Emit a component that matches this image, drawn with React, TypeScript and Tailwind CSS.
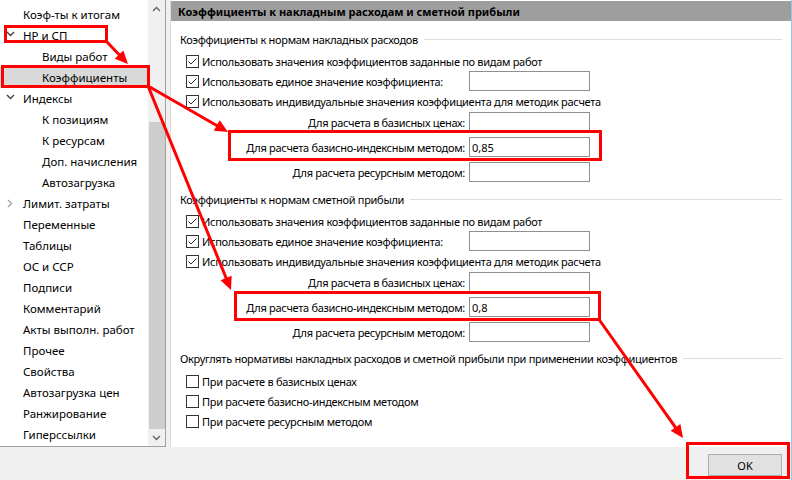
import React from "react";

type TreeRow = {
  label: string;
  level: 1 | 2;
  chevron?: "down" | "right";
  selected?: boolean;
};

const treeRows: TreeRow[] = [
  { label: "Коэф-ты к итогам", level: 1 },
  { label: "НР и СП", level: 1, chevron: "down" },
  { label: "Виды работ", level: 2 },
  { label: "Коэффициенты", level: 2, selected: true },
  { label: "Индексы", level: 1, chevron: "down" },
  { label: "К позициям", level: 2 },
  { label: "К ресурсам", level: 2 },
  { label: "Доп. начисления", level: 2 },
  { label: "Автозагрузка", level: 2 },
  { label: "Лимит. затраты", level: 1, chevron: "right" },
  { label: "Переменные", level: 1 },
  { label: "Таблицы", level: 1 },
  { label: "ОС и ССР", level: 1 },
  { label: "Подписи", level: 1 },
  { label: "Комментарий", level: 1 },
  { label: "Акты выполн. работ", level: 1 },
  { label: "Прочее", level: 1 },
  { label: "Свойства", level: 1 },
  { label: "Автозагрузка цен", level: 1 },
  { label: "Ранжирование", level: 1 },
  { label: "Гиперссылки", level: 1 },
];

function Chevron({ dir }: { dir: "down" | "right" }) {
  if (dir === "down") {
    return (
      <svg width="9" height="6" viewBox="0 0 9 6" className="absolute left-[6px] top-[6px]">
        <path d="M1 1 L4.5 4.5 L8 1" fill="none" stroke="#404040" strokeWidth="1.4" />
      </svg>
    );
  }
  return (
    <svg width="6" height="9" viewBox="0 0 6 9" className="absolute left-[7px] top-[6px]">
      <path d="M1 1 L4.5 4.5 L1 8" fill="none" stroke="#a6a6a6" strokeWidth="1.4" />
    </svg>
  );
}

function Tree() {
  return (
    <div className="flex-1 pt-[4px] text-[11.5px]">
      {treeRows.map((r) => (
        <div
          key={r.label}
          className={`relative h-[21px] flex items-center ${r.level === 1 ? "pl-[23px]" : "pl-[42px]"} ${
            r.selected ? "bg-[#d9d9d9]" : ""
          }`}
        >
          {r.chevron && <Chevron dir={r.chevron} />}
          <span className="whitespace-nowrap">{r.label}</span>
        </div>
      ))}
    </div>
  );
}

function ScrollBar() {
  return (
    <div className="w-[17px] flex flex-col bg-[#f0f0f0]">
      <div className="h-[17px] flex items-center justify-center">
        <svg width="9" height="6" viewBox="0 0 9 6">
          <path d="M1 5 L4.5 1.5 L8 5" fill="none" stroke="#606060" strokeWidth="1.4" />
        </svg>
      </div>
      <div className="h-[105px]" />
      <div className="flex-1 ml-px bg-[#cdcdcd]" />
      <div className="h-[17px] flex items-center justify-center">
        <svg width="9" height="6" viewBox="0 0 9 6">
          <path d="M1 1 L4.5 4.5 L8 1" fill="none" stroke="#606060" strokeWidth="1.4" />
        </svg>
      </div>
    </div>
  );
}

function CheckBox({ checked }: { checked: boolean }) {
  return (
    <span className="w-[13px] h-[13px] shrink-0 border border-[#333333] bg-white flex items-center justify-center">
      {checked && (
        <svg width="11" height="11" viewBox="0 0 11 11">
          <path d="M1.5 5.5 L4 8 L9.5 2.5" fill="none" stroke="#333333" strokeWidth="1" />
        </svg>
      )}
    </span>
  );
}

function TextBox({ value = "" }: { value?: string }) {
  return (
    <div className="w-[121px] h-[20px] border border-[#8f8f8f] bg-white flex items-center px-[2px] tracking-normal">
      {value}
    </div>
  );
}

function GroupTitle({ children }: { children: React.ReactNode }) {
  return (
    <div className="h-[20px] flex items-center pl-[9px] pr-[9px]">
      <span className="whitespace-nowrap">{children}</span>
      <div className="flex-1 h-px bg-[#d5dfe5] ml-[6px]" />
    </div>
  );
}

function CheckRow({ label, checked, input }: { label: string; checked: boolean; input?: boolean }) {
  return (
    <div className="h-[20px] flex items-center">
      <div className="w-[298px] flex items-center gap-[3px] pl-[15px]">
        <CheckBox checked={checked} />
        <span className="whitespace-nowrap">{label}</span>
      </div>
      {input && <TextBox />}
    </div>
  );
}

function FieldRow({ label, value }: { label: string; value?: string }) {
  return (
    <div className="h-[20px] flex items-center">
      <div className="w-[294px] text-right whitespace-nowrap">{label}</div>
      <div className="ml-[4px]">
        <TextBox value={value} />
      </div>
    </div>
  );
}

function CoefficientGroup({ title, index }: { title: string; index: string }) {
  return (
    <>
      <GroupTitle>{title}</GroupTitle>
      <div className="mt-[2px]">
        <CheckRow checked label="Использовать значения коэффициентов заданные по видам работ" />
        <CheckRow checked input label="Использовать единое значение коэффициента:" />
        <CheckRow checked label="Использовать индивидуальные значения коэффициента для методик расчета" />
      </div>
      <div className="mt-px flex flex-col gap-[5px]">
        <FieldRow label="Для расчета в базисных ценах:" />
        <FieldRow label="Для расчета базисно-индексным методом:" value={index} />
        <FieldRow label="Для расчета ресурсным методом:" />
      </div>
    </>
  );
}

function arrowHead(x1: number, y1: number, x2: number, y2: number) {
  const a = Math.atan2(y2 - y1, x2 - x1);
  const len = 13;
  const w = 6;
  const bx = x2 - len * Math.cos(a);
  const by = y2 - len * Math.sin(a);
  const px = -Math.sin(a) * w;
  const py = Math.cos(a) * w;
  return `${x2},${y2} ${bx + px},${by + py} ${bx - px},${by - py}`;
}

const arrows = [
  [107, 42, 128, 64],
  [148, 86, 228, 132],
  [148, 86, 231, 290],
  [598, 318, 683, 438],
];

function Annotations() {
  return (
    <svg className="absolute inset-0 pointer-events-none" width="792" height="480">
      <g fill="none" stroke="#ff0000" strokeWidth="3">
        <rect x="5.5" y="26.5" width="101" height="15" />
        <rect x="2.5" y="66.5" width="146" height="20" />
        <rect x="229.5" y="131.5" width="371" height="28" />
        <rect x="235.5" y="292.5" width="364" height="27" />
        <rect x="687.5" y="443.5" width="101" height="34" />
      </g>
      {arrows.map(([x1, y1, x2, y2], i) => {
        const a = Math.atan2(y2 - y1, x2 - x1);
        const ex = x2 - 10 * Math.cos(a);
        const ey = y2 - 10 * Math.sin(a);
        return (
          <g key={i}>
            <line x1={x1} y1={y1} x2={ex} y2={ey} stroke="#ff0000" strokeWidth="3" />
            <polygon points={arrowHead(x1, y1, x2, y2)} fill="#ff0000" />
          </g>
        );
      })}
    </svg>
  );
}

export default function App() {
  return (
    <div className="relative w-[792px] h-[480px] overflow-hidden bg-[#f0f0f0] text-[11px] text-black font-['Noto_Sans',sans-serif] leading-none">
      <div className="flex flex-col h-full border-r border-[#9cc3e8]">
        <div className="h-[447px] flex">
          {/* tree */}
          <div className="w-[166px] h-[447px] flex bg-white border-r border-b border-[#a0a0a0]">
            <Tree />
            <ScrollBar />
          </div>

          {/* settings */}
          <div className="ml-[4px] flex-1 flex flex-col bg-white border-l border-[#dcdcdc] tracking-[-0.3px]">
            <div className="mt-px h-[20px] bg-[#9e9e9e] flex items-center pl-[7px] font-bold tracking-normal">
              Коэффициенты к накладным расходам и сметной прибыли
            </div>

            <div className="mt-[8px]">
              <CoefficientGroup title="Коэффициенты к нормам накладных расходов" index="0,85" />
            </div>
            <div className="mt-[7px]">
              <CoefficientGroup title="Коэффициенты к нормам сметной прибыли" index="0,8" />
            </div>

            <div className="mt-[6px]">
              <GroupTitle>
                Округлять нормативы накладных расходов и сметной прибыли при применении коэффициентов
              </GroupTitle>
              <div className="mt-[3px]">
                <CheckRow checked={false} label="При расчете в базисных ценах" />
                <CheckRow checked={false} label="При расчете базисно-индексным методом" />
                <CheckRow checked={false} label="При расчете ресурсным методом" />
              </div>
            </div>
          </div>
        </div>

        <div className="flex-1 flex justify-end items-start pt-[7px] pr-[9px]">
          <button className="w-[74px] h-[22px] bg-[#e1e1e1] border border-[#adadad] flex items-center justify-center">
            OK
          </button>
        </div>
      </div>

      <Annotations />
    </div>
  );
}
